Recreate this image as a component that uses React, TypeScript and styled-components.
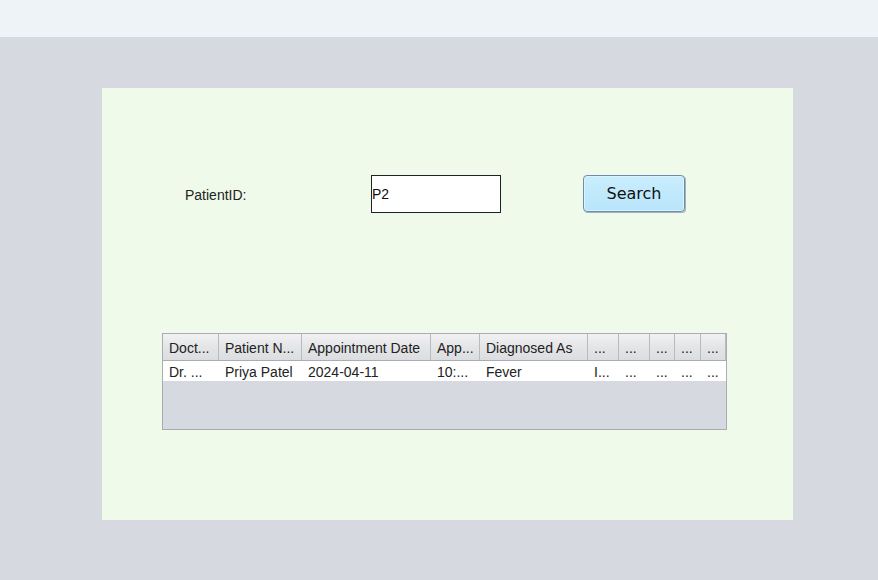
import React, { FunctionComponent } from "react";
import styled, { createGlobalStyle } from "styled-components";

const GlobalStyle = createGlobalStyle`
  html, body {
    margin: 0;
    padding: 0;
    background: #d6d9e0;
    font-family: "Liberation Sans", Arial, sans-serif;
  }
`;

const Page = styled.div`
  width: 878px;
  height: 580px;
  background: #d6d9e0;
  overflow: hidden;
`;

const TopBar = styled.div`
  height: 37px;
  background: #eef3f8;
`;

const Panel = styled.div`
  margin: 51px 0 0 102px;
  width: 691px;
  height: 432px;
  background: #effaea;
  box-sizing: border-box;
  padding-top: 87px;
`;

const FormRow = styled.div`
  display: flex;
  align-items: flex-start;
  height: 38px;
`;

const Label = styled.span`
  margin-left: 83px;
  width: 186px;
  font-size: 14px;
  color: #222;
  line-height: 41px;
`;

const Input = styled.div`
  width: 130px;
  height: 38px;
  box-sizing: border-box;
  border: 1px solid #222;
  background: #ffffff;
  font-size: 14px;
  color: #111;
  line-height: 37px;
  padding-left: 0;
`;

const Button = styled.button`
  margin-left: 82px;
  width: 102px;
  height: 37px;
  box-sizing: border-box;
  border: 1px solid #6e8ea6;
  border-radius: 4px;
  background: linear-gradient(#c9eefe, #b8e4fa);
  box-shadow: inset 0 0 0 1px #d9f3ff, 1px 1px 0 #9fb3c2;
  font-family: "DejaVu Sans", Tahoma, sans-serif;
  font-size: 16px;
  color: #111;
  padding: 0 0 1px;
`;

const TableBox = styled.div`
  margin: 120px 0 0 60px;
  width: 565px;
  height: 97px;
  box-sizing: border-box;
  border: 1px solid #a9acb2;
  background: #d6d9e0;
  font-size: 14px;
  color: #222;
`;

const HeaderRow = styled.div`
  display: flex;
  height: 26px;
  border-bottom: 1px solid #a9acb2;
  background: linear-gradient(#f2f2f3, #e4e5e7 50%, #dcdde0);
`;

const HeadCell = styled.div<{ $w: number }>`
  width: ${(p) => p.$w}px;
  box-sizing: border-box;
  padding-left: 6px;
  line-height: 28px;
  border-right: 1px solid #b8bbc0;
  white-space: nowrap;
  overflow: hidden;
`;

const BodyRow = styled.div`
  display: flex;
  height: 20px;
  background: #ffffff;
`;

const Cell = styled.div<{ $w: number }>`
  width: ${(p) => p.$w}px;
  box-sizing: border-box;
  padding-left: 6px;
  line-height: 23px;
  white-space: nowrap;
  overflow: hidden;
`;

const columns = [
  { w: 56, head: "Doct...", value: "Dr. ..." },
  { w: 83, head: "Patient N...", value: "Priya Patel" },
  { w: 129, head: "Appointment Date", value: "2024-04-11" },
  { w: 49, head: "App...", value: "10:..." },
  { w: 108, head: "Diagnosed As", value: "Fever" },
  { w: 31, head: "...", value: "I..." },
  { w: 31, head: "...", value: "..." },
  { w: 25, head: "...", value: "..." },
  { w: 26, head: "...", value: "..." },
  { w: 25, head: "...", value: "..." },
];

const App: FunctionComponent = () => {
  return (
    <>
      <GlobalStyle />
      <Page>
        <TopBar />
        <Panel>
          <FormRow>
            <Label>PatientID:</Label>
            <Input>P2</Input>
            <Button>Search</Button>
          </FormRow>
          <TableBox>
            <HeaderRow>
              {columns.map((c, i) => (
                <HeadCell key={i} $w={c.w}>{c.head}</HeadCell>
              ))}
            </HeaderRow>
            <BodyRow>
              {columns.map((c, i) => (
                <Cell key={i} $w={c.w}>{c.value}</Cell>
              ))}
            </BodyRow>
          </TableBox>
        </Panel>
      </Page>
    </>
  );
};

export default App;
